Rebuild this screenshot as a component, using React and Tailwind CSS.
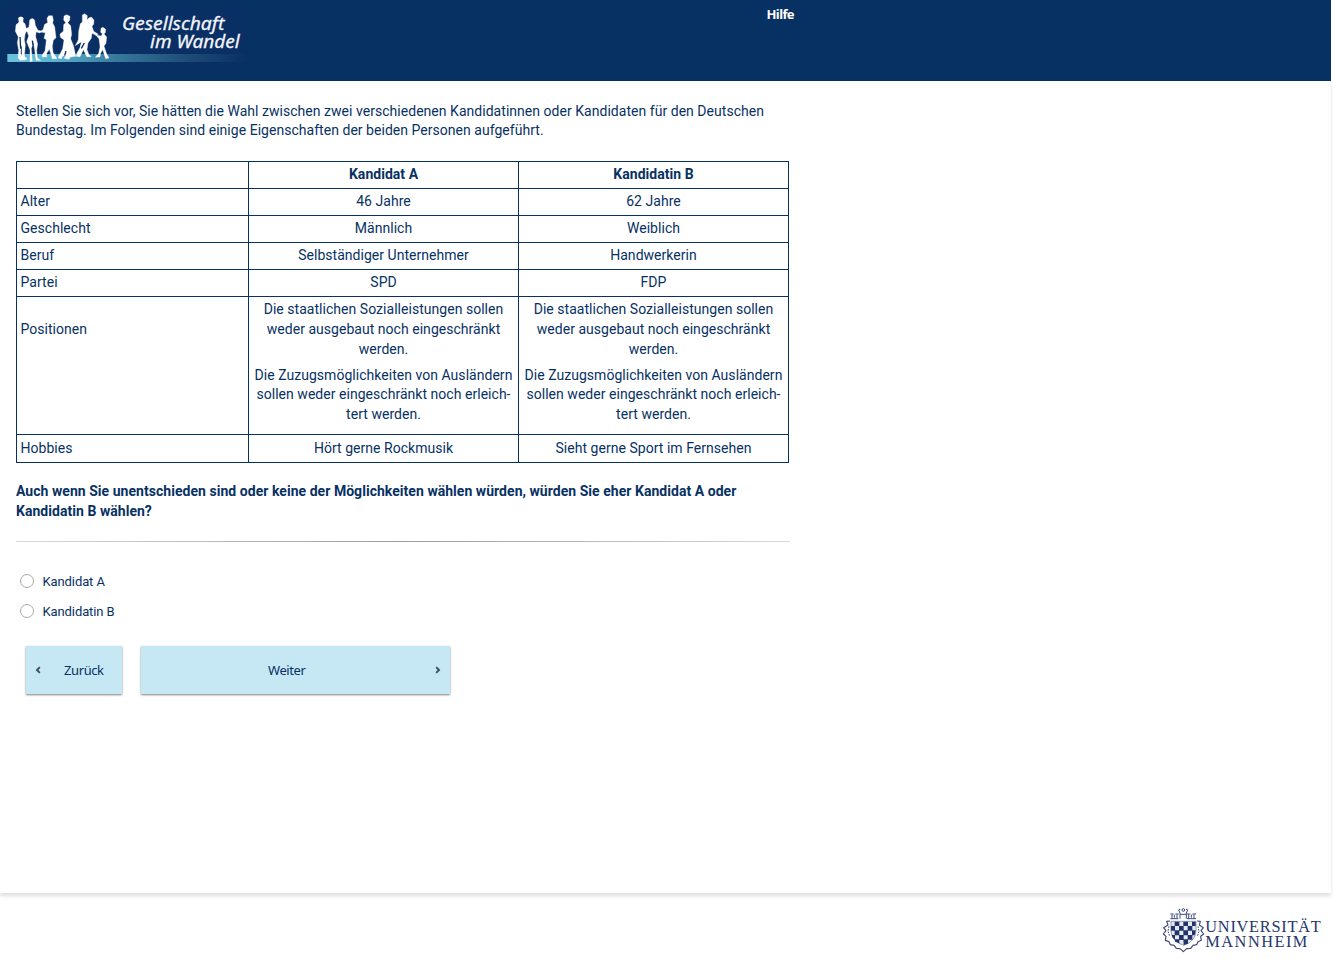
const ROBOTO = "font-['Roboto',sans-serif]";

function StudyLogo() {
  return (
    <svg className="block h-[81px] w-[260px]" viewBox="0 0 780 243" role="img" aria-label="Gesellschaft im Wandel">
      <defs>
        <linearGradient id="bar" x1="0" x2="1" y1="0" y2="0">
          <stop offset="0" stopColor="#6bc3dc" />
          <stop offset="0.2" stopColor="#5ab2cf" />
          <stop offset="0.45" stopColor="#397a9c" />
          <stop offset="0.75" stopColor="#1d4c78" />
          <stop offset="1" stopColor="#0a3064" />
        </linearGradient>
      </defs>
      <rect x="22" y="20" width="718" height="188" fill="#092f65" />
      <rect x="22" y="162" width="718" height="24" fill="url(#bar)" />
      <g fill="#fff" stroke="#fff" strokeWidth="1" strokeLinejoin="round">
        <path d="M55 54Q63 47 70 54L69 66L75 71L80 90L75 104L73 119L76 135L73 169L82 177L73 180L66 171L66 139L63 138L62 163L75 179L61 181L54 174L56 151L52 128L55 111L46 94L48 74L57 67Z" />
        <path d="M89 60Q97 50 104 61L106 76L114 91L124 93L120 99L108 96L107 110L113 132L110 151L112 174L122 181L108 181L104 149L100 125L94 146L97 183L90 185L90 150L80 125L86 108L82 96L72 91L76 87L87 81Z" />
        <path d="M141 55L146 47L157 47L160 60L158 69L164 80L168 113L160 121L157 139L159 157L171 176L157 176L148 148L140 160L140 171L127 171L126 166L135 153L139 119L132 115L136 98L118 96L129 89L134 73L143 68Z" />
        <path d="M192 48L200 44L210 49L209 61L203 68L212 77L215 103L212 116L221 139L227 169L211 171L207 178L192 175L197 169L188 167L184 176L174 174L188 146L192 120L181 112L180 102L190 94L191 74L197 68L191 60Z" />
        <path d="M247 45L254 41L262 47L261 60L266 54L274 51L282 60L281 73L276 79L281 94L295 103L288 106L276 100L274 115L264 129L261 149L267 164L274 170L260 170L249 146L242 163L229 163L240 143L245 125L226 137L235 119L236 94L241 71L247 66Z" />
        <path d="M246 120L259 119L254 142L240 170L228 169L239 151Z" />
        <path d="M303 85L309 82L317 88L316 98L312 102L320 111L318 130L312 138L320 162L327 174L317 176L308 149L302 160L300 171L286 172L296 160L300 140L297 116L287 105L304 108L307 101L302 97Z" />
      </g>
      <g fill="none" stroke="#0b2f66" strokeWidth="4">
        <path d="M60 111L62 146M97 122L99 135M194 167L198 153M244 145L253 129" />
      </g>
      <g fill="#f3f5f9" stroke="#f3f5f9" strokeWidth="0.8" fontFamily="'Noto Sans', sans-serif" fontStyle="italic" fontSize="53" letterSpacing="0">
        <text x="366" y="91" textLength="307" lengthAdjust="spacingAndGlyphs">Gesellschaft</text>
        <text x="450" y="145" textLength="269" lengthAdjust="spacingAndGlyphs">im Wandel</text>
      </g>
    </svg>
  );
}

function UniversityLogo() {
  return (
    <svg className="block h-[74px] w-[183px]" viewBox="0 0 549 222" role="img" aria-label="Universität Mannheim">
      <g fill="none" stroke="#3d4b79" strokeWidth="3">
        <path d="M61 101H85M66 100V88M81 100V88M61 87H71M76 87H86M73 89V98M111 101H138M116 100V88M132 100V88M111 87H121M127 87H138M124 89V98M90 101V84L86 75M109 101V84L113 75M90 88H109" />
        <circle cx="100" cy="75" r="4" />
        <path d="M86 73H91M108 73H113" />
        <path d="M60 108L50 109L54 120L41 128L48 137L40 147L48 154L46 166L57 170L61 179L72 181L79 190L90 191L100 200L110 191L122 190L129 181L140 179L144 170L154 166L152 154L161 147L153 137L160 128L148 120L151 109L141 108" strokeLinejoin="round" strokeWidth="3.5" />
        <path d="M57 124L54 139L59 154M144 124L147 139L142 154" strokeDasharray="5 3" />
      </g>
      <path d="M63 109H138V139Q136 169 101 181Q66 169 63 139Z" fill="#e4e8f1" stroke="#5f6b92" strokeWidth="2" />
      <g fill="#22336a">
        <path d="M74 110H88V123H74ZM100 110H114V123H100ZM126 110H137V123H126ZM63 123H75V137H63ZM87 123H101V137H87ZM113 123H127V137H113ZM74 136H88V151H74ZM100 136H114V151H100ZM126 136H137L134 151H126ZM65 150H75V164L68 158ZM87 150H101V165H87ZM113 150H127V164H113ZM74 163H88V175L75 170ZM100 163H114V176L101 180Z" />
      </g>
      <g fill="#26376c" fontFamily="'Liberation Serif', serif" fontSize="49" letterSpacing="0">
        <text x="166" y="142" textLength="346">UNIVERSITÄT</text>
        <text x="166" y="186" textLength="306">MANNHEIM</text>
      </g>
    </svg>
  );
}

function Chevron({ flip }) {
  return (
    <svg className="mt-px h-[8px] w-[6px]" viewBox="0 0 6 8" fill="none" stroke="#3f4d57" strokeWidth="1.9">
      <path d={flip ? "M4.8 1.2L2 4L4.8 6.8" : "M1.2 1.2L4 4L1.2 6.8"} />
    </svg>
  );
}

const rows = [
  ["Alter", "46 Jahre", "62 Jahre"],
  ["Geschlecht", "Männlich", "Weiblich"],
  ["Beruf", "Selbständiger Unternehmer", "Handwerkerin"],
  ["Partei", "SPD", "FDP"],
];

const cell = "border-r border-b border-[#083163]";

function Row({ label, a, b, height }) {
  return (
    <>
      <div className={`${cell} ${height} pl-[3.5px]`}>{label}</div>
      <div className={`${cell} ${height} text-center`}>{a}</div>
      <div className={`${cell} ${height} text-center`}>{b}</div>
    </>
  );
}

function Positions() {
  return (
    <div className={`${cell} h-[138px] pt-[2px] text-center whitespace-nowrap`}>
      <p className="leading-[20px]">
        Die staatlichen Sozialleistungen sollen
        <br />
        weder ausgebaut noch eingeschränkt
        <br />
        werden.
      </p>
      <p className="mt-[6.6px] leading-[19.6px]">
        Die Zuzugsmöglichkeiten von Ausländern
        <br />
        sollen weder eingeschränkt noch erleich-
        <br />
        tert werden.
      </p>
    </div>
  );
}

function Option({ label }) {
  return (
    <label className="flex h-[30px] items-center gap-[8.5px] pl-[4px] text-[13px] tracking-[-0.1px]">
      <input
        type="radio"
        name="candidate"
        className="m-0 mb-px h-[14px] w-[14px] appearance-none rounded-full border border-[#a8a8a8] bg-white"
      />
      <span>{label}</span>
    </label>
  );
}

export default function App() {
  return (
    <div className={`${ROBOTO} flex h-[959px] w-[1333px] flex-col overflow-hidden bg-white text-[14px] tracking-[0.033px] text-[#083163]`}>
      <header className="flex h-[81px] w-[1331px] shrink-0 bg-[#083163]">
        <StudyLogo />
        <a className="ml-[506.5px] pt-[4px] font-['Noto_Sans',sans-serif] text-[13px] leading-[20px] font-bold tracking-[-0.6px] text-white">
          Hilfe
        </a>
      </header>

      <main className="flex h-[812px] w-[1331px] shrink-0 flex-col bg-white pl-[16px] shadow-[0_3px_4px_rgba(0,0,0,0.13)]">
        <p className="mt-[21px] leading-[19px] whitespace-nowrap">
          Stellen Sie sich vor, Sie hätten die Wahl zwischen zwei verschiedenen Kandidatinnen oder Kandidaten für den Deutschen
          <br />
          Bundestag. Im Folgenden sind einige Eigenschaften der beiden Personen aufgeführt.
        </p>

        <div className="mt-[21px] grid w-[773px] grid-cols-[232px_270px_270px] border-t border-l border-[#083163] leading-[25px]">
          <div className={`${cell} h-[27px]`} />
          <div className={`${cell} h-[27px] text-center font-bold`}>Kandidat A</div>
          <div className={`${cell} h-[27px] text-center font-bold`}>Kandidatin B</div>
          {rows.map(([label, a, b]) => (
            <Row key={label} label={label} a={a} b={b} height="h-[27px]" />
          ))}
          <div className={`${cell} h-[138px] pt-[20px] pl-[3.5px]`}>Positionen</div>
          <Positions />
          <Positions />
          <Row label="Hobbies" a="Hört gerne Rockmusik" b="Sieht gerne Sport im Fernsehen" height="h-[28px] pt-[1px]" />
        </div>

        <p className="mt-[19px] leading-[19.6px] font-bold tracking-[0.04px] whitespace-nowrap">
          Auch wenn Sie unentschieden sind oder keine der Möglichkeiten wählen würden, würden Sie eher Kandidat A oder
          <br />
          Kandidatin B wählen?
        </p>

        <div className="mt-[19.8px] h-px w-[774px] bg-linear-to-r from-[#d9d9d9] via-[#9c9c9c] to-[#d9d9d9]" />

        <div className="mt-[25px] flex flex-col">
          <Option label="Kandidat A" />
          <Option label="Kandidatin B" />
        </div>

        <div className="mt-[19px] ml-[10px] flex gap-[19px] font-['Noto_Sans',sans-serif] text-[13px] tracking-[-0.4px]">
          <button className="flex h-[48px] w-[96px] items-center bg-[#c5e8f4] pl-[9px] shadow-[0_1px_2px_rgba(0,0,0,0.5)]">
            <Chevron flip />
            <span className="ml-[23px] pt-[2px]">Zurück</span>
          </button>
          <button className="flex h-[48px] w-[309px] items-center bg-[#c5e8f4] pr-[9px] shadow-[0_1px_2px_rgba(0,0,0,0.5)]">
            <span className="ml-[127px] grow pt-[2px] text-left">Weiter</span>
            <Chevron />
          </button>
        </div>
      </main>

      <footer className="flex h-[66px] w-full shrink-0 justify-end">
        <div className="-mt-[8px]">
          <UniversityLogo />
        </div>
      </footer>
    </div>
  );
}
